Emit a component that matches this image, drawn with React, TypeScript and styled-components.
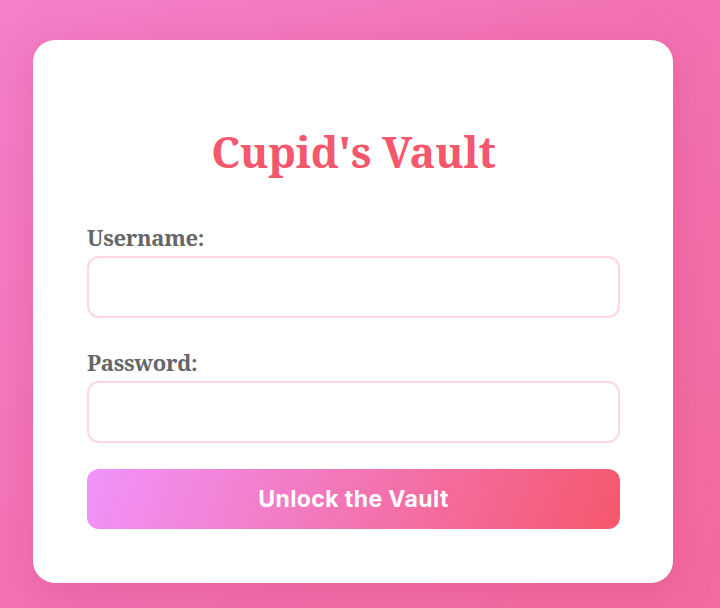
import React from 'react';
import styled, { createGlobalStyle } from 'styled-components';

const GlobalStyle = createGlobalStyle`
  html, body {
    margin: 0;
    padding: 0;
  }
  body {
    width: 720px;
    height: 608px;
    overflow: hidden;
    background: linear-gradient(135deg, #f57fca 0%, #f272b2 50%, #f26a9e 100%);
  }
`;

const Page = styled.div`
  height: 608px;
  box-sizing: border-box;
  padding: 40px 47px 25px 33px;
  display: flex;
  align-items: flex-start;
`;

const Card = styled.form`
  width: 640px;
  box-sizing: border-box;
  padding: 82px 53px 54px 54px;
  background: #ffffff;
  border-radius: 22px;
  box-shadow: 0 10px 40px rgba(200, 50, 110, 0.25);
  display: flex;
  flex-direction: column;
`;

const serif = `'Noto Serif', 'DejaVu Serif Condensed', 'DejaVu Serif', serif`;

const Title = styled.h1`
  margin: 0 0 42px;
  text-align: center;
  font-family: ${serif};
  font-stretch: condensed;
  font-weight: bold;
  font-size: 43px;
  line-height: 60px;
  letter-spacing: -0.2px;
  color: #f5576c;
`;

const Field = styled.div`
  display: flex;
  flex-direction: column;
  margin-bottom: ${({ $last }: { $last?: boolean }) => ($last ? '26px' : '31px')};
`;

const Label = styled.label`
  font-family: ${serif};
  font-stretch: condensed;
  font-weight: bold;
  font-size: 22px;
  line-height: 26px;
  letter-spacing: -0.3px;
  color: #666666;
  margin-bottom: 6px;
`;

const Input = styled.input`
  flex-shrink: 0;
  height: 62px;
  box-sizing: border-box;
  border: 2px solid #ffd6e2;
  border-radius: 12px;
  padding: 0 16px;
  font-size: 18px;
  outline: none;
  background: #fff;
`;

const Button = styled.button`
  flex-shrink: 0;
  height: 60px;
  border: none;
  border-radius: 12px;
  background: linear-gradient(110deg, #f093fb 0%, #f5576c 100%);
  color: #ffffff;
  font-family: Inter, 'Liberation Sans', sans-serif;
  font-weight: 700;
  font-size: 23px;
  letter-spacing: 0.4px;
  cursor: pointer;
`;

export default function App() {
  return (
    <>
      <GlobalStyle />
      <Page>
        <Card onSubmit={(e) => e.preventDefault()}>
          <Title>Cupid's Vault</Title>
          <Field>
            <Label htmlFor="username">Username:</Label>
            <Input id="username" type="text" />
          </Field>
          <Field $last>
            <Label htmlFor="password">Password:</Label>
            <Input id="password" type="password" />
          </Field>
          <Button type="submit">Unlock the Vault</Button>
        </Card>
      </Page>
    </>
  );
}
